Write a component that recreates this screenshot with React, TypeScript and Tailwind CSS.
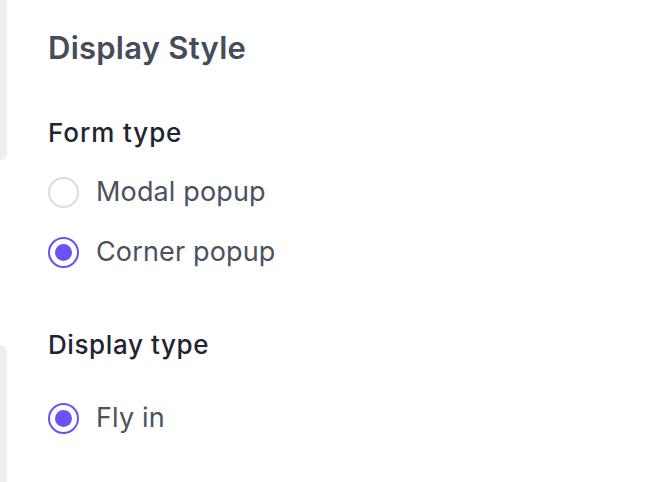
import React from "react";

function Radio({ checked, label }: { checked: boolean; label: string }) {
  return (
    <div className="flex items-center h-[32px]">
      <div
        className={
          checked
            ? "w-[31px] h-[31px] rounded-full border-2 border-[#6a52f7] flex items-center justify-center"
            : "w-[31px] h-[31px] rounded-full border-2 border-[#dcdcdc]"
        }
      >
        {checked && <div className="w-[17px] h-[17px] rounded-full bg-[#6a52f7]" />}
      </div>
      <span className="ml-[17px] text-[27px] leading-[32px] tracking-[0.15px] text-[#4a5160]">{label}</span>
    </div>
  );
}

export default function App() {
  return (
    <div
      className="w-[672px] h-[482px] bg-white flex overflow-hidden"
      style={{ fontFamily: "Inter, 'Noto Sans', sans-serif" }}
    >
      <div className="w-[7px] flex flex-col shrink-0">
        <div className="h-[160px] bg-[#eceef3] rounded-br-[12px]" />
        <div className="h-[185px]" />
        <div className="flex-1 bg-[#eceef3] rounded-tr-[12px]" />
      </div>
      <div className="flex flex-col pl-[41px]">
        <div className="mt-[30px] h-[36px] text-[31px] leading-[36px] font-semibold tracking-[0.25px] text-[#464c5a]">
          Display Style
        </div>
        <div className="mt-[52px] h-[30px] text-[26px] leading-[30px] font-medium tracking-[0.9px] text-[#1f2430]">
          Form type
        </div>
        <div className="mt-[28px]">
          <Radio checked={false} label="Modal popup" />
        </div>
        <div className="mt-[28px]">
          <Radio checked={true} label="Corner popup" />
        </div>
        <div className="mt-[62px] h-[30px] text-[26px] leading-[30px] font-medium tracking-[0.6px] text-[#1f2430]">
          Display type
        </div>
        <div className="mt-[42px]">
          <Radio checked={true} label="Fly in" />
        </div>
      </div>
    </div>
  );
}
